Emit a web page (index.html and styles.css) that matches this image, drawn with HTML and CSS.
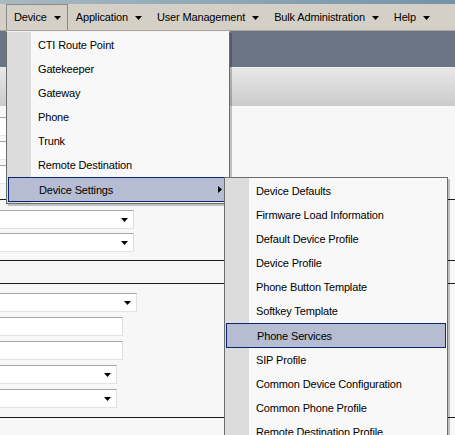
FILE: index.html
```html
<!DOCTYPE html>
<html>
<head>
<meta charset="utf-8">
<link rel="stylesheet" href="styles.css">
</head>
<body>
<div class="topstrip"></div>
<nav class="menubar">
  <div class="mb-item open">Device<svg class="caret" width="7" height="4" viewBox="0 0 7 4"><path d="M0 0H7L3.5 4Z"/></svg></div>
  <div class="mb-item">Application<svg class="caret" width="7" height="4" viewBox="0 0 7 4"><path d="M0 0H7L3.5 4Z"/></svg></div>
  <div class="mb-item">User Management<svg class="caret" width="7" height="4" viewBox="0 0 7 4"><path d="M0 0H7L3.5 4Z"/></svg></div>
  <div class="mb-item">Bulk Administration<svg class="caret" width="7" height="4" viewBox="0 0 7 4"><path d="M0 0H7L3.5 4Z"/></svg></div>
  <div class="mb-item">Help<svg class="caret" width="7" height="4" viewBox="0 0 7 4"><path d="M0 0H7L3.5 4Z"/></svg></div>
</nav>
<main class="page">
  <div class="band-slate"></div>
  <div class="band-grad"></div>
  <div class="content">
    <section class="sec sec-a">
      <div class="field input w133"></div>
      <div class="field input w133"></div>
      <div class="field input w133"></div>
    </section>
    <section class="sec sec-b">
      <div class="field select w133"><svg class="sel-caret" width="7" height="4" viewBox="0 0 7 4"><path d="M0 0H7L3.5 4Z"/></svg></div>
      <div class="field select w133"><svg class="sel-caret" width="7" height="4" viewBox="0 0 7 4"><path d="M0 0H7L3.5 4Z"/></svg></div>
    </section>
    <div class="sec-head"></div>
    <section class="sec sec-c">
      <div class="field select w137"><svg class="sel-caret" width="7" height="4" viewBox="0 0 7 4"><path d="M0 0H7L3.5 4Z"/></svg></div>
      <div class="field input w123"></div>
      <div class="field input w123"></div>
      <div class="field select w117"><svg class="sel-caret" width="7" height="4" viewBox="0 0 7 4"><path d="M0 0H7L3.5 4Z"/></svg></div>
      <div class="field select w117"><svg class="sel-caret" width="7" height="4" viewBox="0 0 7 4"><path d="M0 0H7L3.5 4Z"/></svg></div>
    </section>
  </div>
</main>

<div class="menu menu-device">
  <div class="mi">CTI Route Point</div>
  <div class="mi">Gatekeeper</div>
  <div class="mi">Gateway</div>
  <div class="mi">Phone</div>
  <div class="mi">Trunk</div>
  <div class="mi">Remote Destination</div>
  <div class="mi hot">Device Settings<svg class="sub-caret" width="4" height="7" viewBox="0 0 4 7"><path d="M0 0L4 3.5L0 7Z"/></svg></div>
</div>

<div class="menu menu-sub">
  <div class="mi">Device Defaults</div>
  <div class="mi">Firmware Load Information</div>
  <div class="mi">Default Device Profile</div>
  <div class="mi">Device Profile</div>
  <div class="mi">Phone Button Template</div>
  <div class="mi">Softkey Template</div>
  <div class="mi hot">Phone Services</div>
  <div class="mi">SIP Profile</div>
  <div class="mi">Common Device Configuration</div>
  <div class="mi">Common Phone Profile</div>
  <div class="mi">Remote Destination Profile</div>
</div>
</body>
</html>
```
FILE: styles.css
```css
* { box-sizing: border-box; margin: 0; padding: 0; }
html, body { width: 455px; height: 435px; overflow: hidden; }
body {
  position: relative;
  font-family: "Liberation Sans", Arial, sans-serif;
  font-size: 11px;
  letter-spacing: -0.15px;
  color: #000;
  background: #f7f7f7;
}
.topstrip {
  height: 4px;
  background: linear-gradient(90deg, #a9b9c3, #7493a9);
}
.menubar {
  height: 27px;
  display: flex;
  align-items: stretch;
  padding-left: 6px;
  background: #d4d0c8;
  border-bottom: 1px solid #a9a59d;
}
.mb-item {
  display: flex;
  align-items: center;
  padding: 0 6px 1px 7px;
  border: 1px solid transparent;
  border-bottom: 0;
  white-space: nowrap;
}
.mb-item.open { border-color: #8c8a86; }
.caret { margin-left: 7px; margin-top: 2px; fill: #000; }

.band-slate { height: 36px; background: #6b7586; }
.band-grad {
  height: 39px;
  background: linear-gradient(#e8e8e8, #cbcbcb);
  border-top: 1px solid #eeeeee;
}
.content { background: #f7f7f7; }
.sec { display: flex; flex-direction: column; }
.sec-a { height: 94px; padding-top: 11px; gap: 5px; border-bottom: 1px solid #1c1c1c; }
.sec-b { height: 61px; padding-top: 10px; gap: 4px; border-bottom: 1px solid #1c1c1c; }
.sec-head { height: 23px; border-bottom: 1px solid #1c1c1c; }
.sec-c { height: 134px; padding-top: 9px; gap: 5px; border-bottom: 1px solid #1c1c1c; }

.field {
  position: relative;
  height: 19px;
  background: #fff;
  border-top: 1px solid #a7a7a7;
  border-right: 1px solid #dedede;
  border-bottom: 1px solid #e2e2e8;
}
.w133 { width: 134px; }
.w137 { width: 137px; }
.w123 { width: 123px; }
.w117 { width: 117px; }
.sel-caret {
  position: absolute;
  right: 5px;
  top: 7px;
  fill: #000;
}

/* dropdown menus (overlays) */
.menu {
  position: absolute;
  width: 224px;
  padding: 1px 0;
  border: 1px solid #6c6c6c;
  background: linear-gradient(90deg, #dcdcdc 0 24px, #f8f8f8 24px);
  box-shadow: 2px 2px 0 rgba(0, 0, 0, 0.22);
}
.menu-device {
  left: 6px;
  top: 31px;
  height: 173px;
  border-top-color: #f4f4f4;
}
.menu-sub {
  left: 224px;
  top: 177px;
  height: 290px;
}
.mi {
  display: flex;
  align-items: center;
  height: 24px;
  padding-left: 31px;
  padding-right: 5px;
  white-space: nowrap;
}
.mi.hot {
  height: 25px;
  margin: 0 1px;
  padding-left: 30px;
  background: #b6bdd3;
  border: 1px solid #0c256b;
}
.sub-caret { margin-left: auto; fill: #000; }
```
